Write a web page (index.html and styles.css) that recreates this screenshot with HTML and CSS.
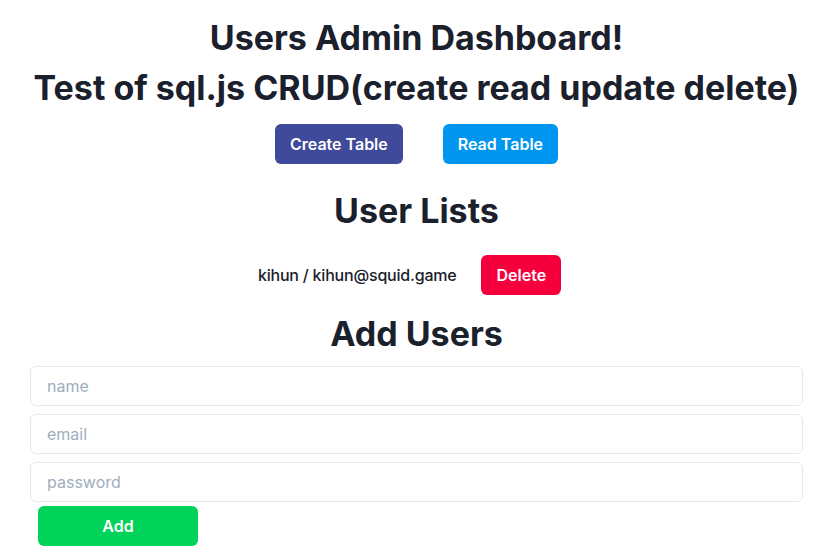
FILE: index.html
```html
<!DOCTYPE html>
<html lang="en">
<head>
  <meta charset="UTF-8" />
  <meta name="viewport" content="width=device-width, initial-scale=1" />
  <title>Users Admin Dashboard</title>
  <link rel="stylesheet" href="styles.css">
</head>
<body>
  <h1>Users Admin Dashboard!</h1>
  <h1>Test of sql.js CRUD(create read update delete)</h1>

  <div class="actions">
    <button class="btn btn-indigo">Create Table</button>
    <button class="btn btn-blue">Read Table</button>
  </div>

  <h2>User Lists</h2>
  <ul class="user-list">
    <li class="user-row">
      <span class="user-text">kihun / kihun@squid.game</span>
      <button class="btn btn-red">Delete</button>
    </li>
  </ul>

  <h2>Add Users</h2>
  <form class="add-form">
    <input type="text" placeholder="name" />
    <input type="email" placeholder="email" />
    <input type="password" placeholder="password" />
    <button type="button" class="btn btn-green">Add</button>
  </form>
</body>
</html>
```

FILE: styles.css
```css
body {
  font-family: Inter, "Noto Sans", sans-serif;
  color: #1a202c;
  margin: 0;
  padding: 0 33px 0 30px;
  background: #ffffff;
}
h1, h2 {
  font-size: 34px;
  font-weight: 700;
  text-align: center;
  margin: 0;
  line-height: 50px;
}
h1:first-child {
  margin-top: 13px;
}
.actions {
  display: flex;
  justify-content: center;
  gap: 40px;
  margin: 11px 0 22px;
}
.btn {
  font-family: inherit;
  font-size: 16px;
  font-weight: 600;
  height: 40px;
  padding: 0 15px;
  border: none;
  border-radius: 6px;
  color: white;
  cursor: pointer;
}
.btn-indigo { background: #3f4a9a; }
.btn-blue { background: #0096f0; }
.btn-red { background: #f5003c; }
.btn-green { background: #00d25a; width: 160px; margin-left: 8px; }
.user-list {
  list-style: none;
  padding: 0;
  margin: 19px 0 14px;
}
.user-row {
  display: flex;
  justify-content: center;
  align-items: center;
  gap: 25px;
  padding-right: 14px;
  font-size: 16px;
  font-weight: 500;
  letter-spacing: -0.2px;
}
.add-form {
  display: flex;
  flex-direction: column;
  gap: 8px;
  margin-top: 7px;
}
.add-form input {
  font-family: inherit;
  font-size: 16px;
  height: 40px;
  box-sizing: border-box;
  padding: 0 16px;
  border: 1px solid #e2e8f0;
  border-radius: 6px;
  color: #1a202c;
  outline: none;
}
.add-form input::placeholder {
  color: #a0aec0;
}
.add-form .btn-green {
  align-self: flex-start;
  margin-top: -4px;
}
```
